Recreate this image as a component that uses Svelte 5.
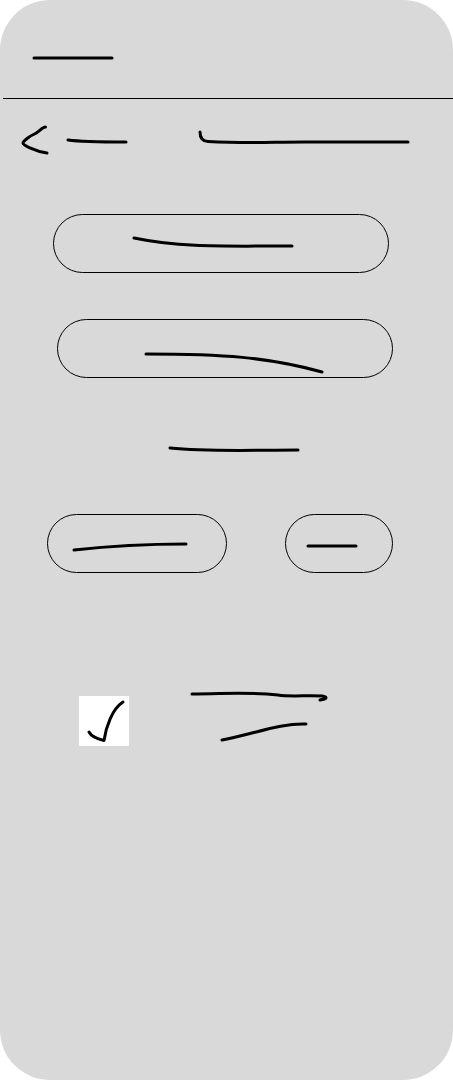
<script>
  // Every stroke shares the 453 x 1080 sketch coordinate system; box is its window on it.
  const title = { box: [30, 50, 90, 16], d: 'M34 58H112' };
  const back = { box: [20, 120, 32, 40], d: 'M45.5 127C42 127 39 132 34.5 134C30 136 23 141 23 143C23 145 35 151.500 47 153' };
  const backLabel = { box: [64, 120, 68, 40], d: 'M68 140C82 142 98 142 126 142' };
  const heading = { box: [196, 120, 218, 40], d: 'M200 132C200 138 202 141.200 208 141.500C248 143.500 270 142 304 142H408' };
  const fields = [
    { box: [54, 215, 334, 57], d: 'M134 238C182 248 226 246 292 246' },
    { box: [58, 320, 334, 57], d: 'M146 354C222 354 268 357 322 372' }
  ];
  const caption = { box: [165, 440, 140, 20], d: 'M170 448C208 452 254 450 298 450' };
  const buttons = [
    { box: [48, 515, 178, 57], d: 'M74 550C110 546 140 544 186 544' },
    { box: [286, 515, 106, 57], d: 'M308 546H356' }
  ];
  const check = { box: [79, 696, 50, 50], d: 'M89 732C91 736 98 739 104 740.500C106 727 112 709 123 702' };
  const consent = [
    { box: [186, 686, 146, 20], d: 'M192 694C224 694 246 691.500 278 695C290 697 308 695 322 696C328 697 327 699 320 700' },
    { box: [186, 716, 146, 30], d: 'M222 740C254 734 280 723 306 724' }
  ];
</script>

{#snippet stroke(s)}
  <svg width={s.box[2]} height={s.box[3]} viewBox={s.box.join(' ')} aria-hidden="true">
    <path d={s.d} />
  </svg>
{/snippet}

<div class="screen">
  <header>{@render stroke(title)}</header>
  <nav>
    <button class="back">{@render stroke(back)}{@render stroke(backLabel)}</button>
    {@render stroke(heading)}
  </nav>
  <main>
    <div class="fields">
      {#each fields as field, i}
        <div class="pill" class:shifted={i === 1}>{@render stroke(field)}</div>
      {/each}
    </div>
    <div class="caption">{@render stroke(caption)}</div>
    <div class="actions">
      {#each buttons as item}
        <button class="pill">{@render stroke(item)}</button>
      {/each}
    </div>
    <div class="agreement">
      <div class="checkbox">{@render stroke(check)}</div>
      <div class="lines">
        {#each consent as line}
          {@render stroke(line)}
        {/each}
      </div>
    </div>
  </main>
</div>

<style>
  :global(body) { margin: 0; background: #fff; }
  .screen {
    box-sizing: border-box;
    width: 453px;
    height: 1080px;
    overflow: hidden;
    border-radius: 50px;
    background: #d9d9d9;
  }
  svg { display: block; flex: none; }
  path {
    fill: none;
    stroke: #000;
    stroke-width: 3;
    stroke-linecap: round;
    stroke-linejoin: round;
  }
  button {
    padding: 0;
    border: 0;
    background: none;
    color: inherit;
  }
  header {
    box-sizing: border-box;
    height: 99px;
    margin-left: 3px;
    padding: 50px 0 0 27px;
    border-bottom: 1px solid #000;
  }
  nav {
    display: flex;
    gap: 64px;
    padding: 21px 0 0 20px;
  }
  .back { display: flex; gap: 12px; }
  .fields {
    display: flex;
    flex-direction: column;
    align-items: flex-start;
    gap: 46px;
    padding: 54px 0 0 53px;
  }
  .pill {
    border: 1px solid #000;
    border-radius: 30px;
  }
  .pill.shifted { margin-left: 4px; }
  .caption { padding: 62px 0 0 165px; }
  .actions {
    display: flex;
    gap: 58px;
    padding: 54px 0 0 47px;
  }
  .agreement {
    display: flex;
    gap: 57px;
    padding: 113px 0 0 79px;
  }
  .checkbox {
    align-self: flex-end;
    background: #fff;
  }
  .lines {
    display: flex;
    flex-direction: column;
    gap: 10px;
  }
</style>
